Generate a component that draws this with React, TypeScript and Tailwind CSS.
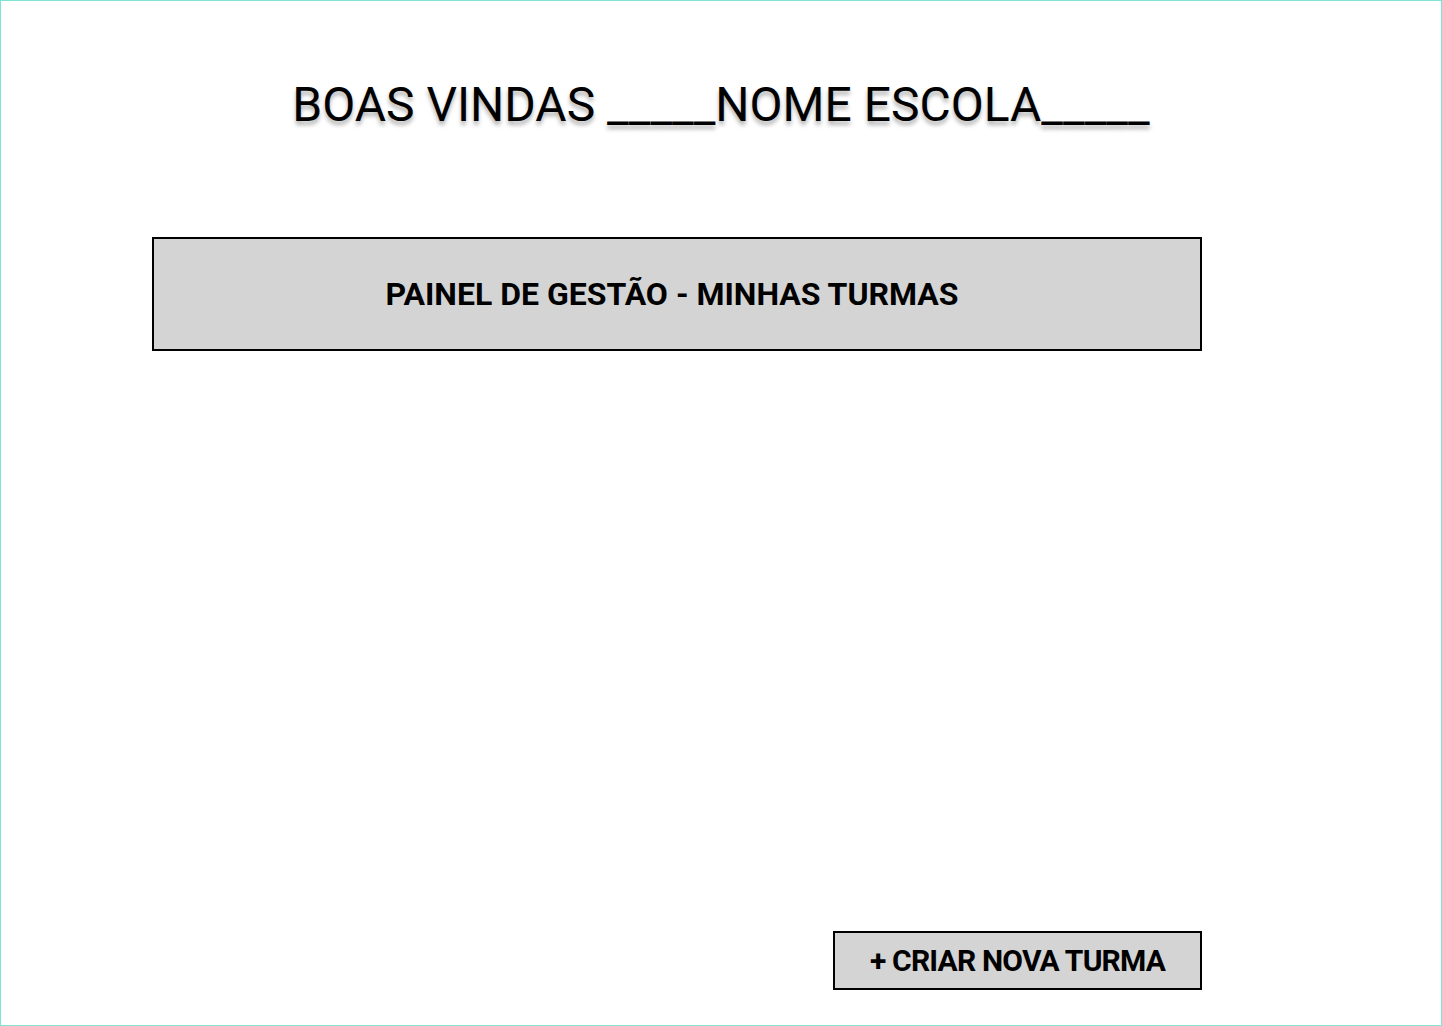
export default function App() {
  return (
    <div
      className="h-[1026px] w-full border border-[#7fe3d5] bg-white text-black flex flex-col"
      style={{ fontFamily: 'Roboto, "Liberation Sans", sans-serif' }}
    >
      {/* Header */}
      <h1 className="mt-[75px] text-center text-[48px] leading-[58px] font-normal [text-shadow:0_4px_4px_rgba(0,0,0,0.3)]">
        BOAS VINDAS _____NOME ESCOLA_____
      </h1>

      {/* Panel */}
      <div className="ml-[151px] mt-[103px] w-[1050px] h-[114px] border-2 border-black bg-[#d4d4d4] flex items-center justify-center">
        <span className="text-[32px] font-bold pr-[10px]">PAINEL DE GESTÃO - MINHAS TURMAS</span>
      </div>

      {/* Bottom action */}
      <div className="mt-auto mb-[35px] ml-[832px] w-[369px]">
        <button className="w-full h-[59px] border-2 border-black bg-[#d4d4d4] text-[30px] font-bold tracking-[-0.8px] flex items-center justify-center">
          + CRIAR NOVA TURMA
        </button>
      </div>
    </div>
  );
}
